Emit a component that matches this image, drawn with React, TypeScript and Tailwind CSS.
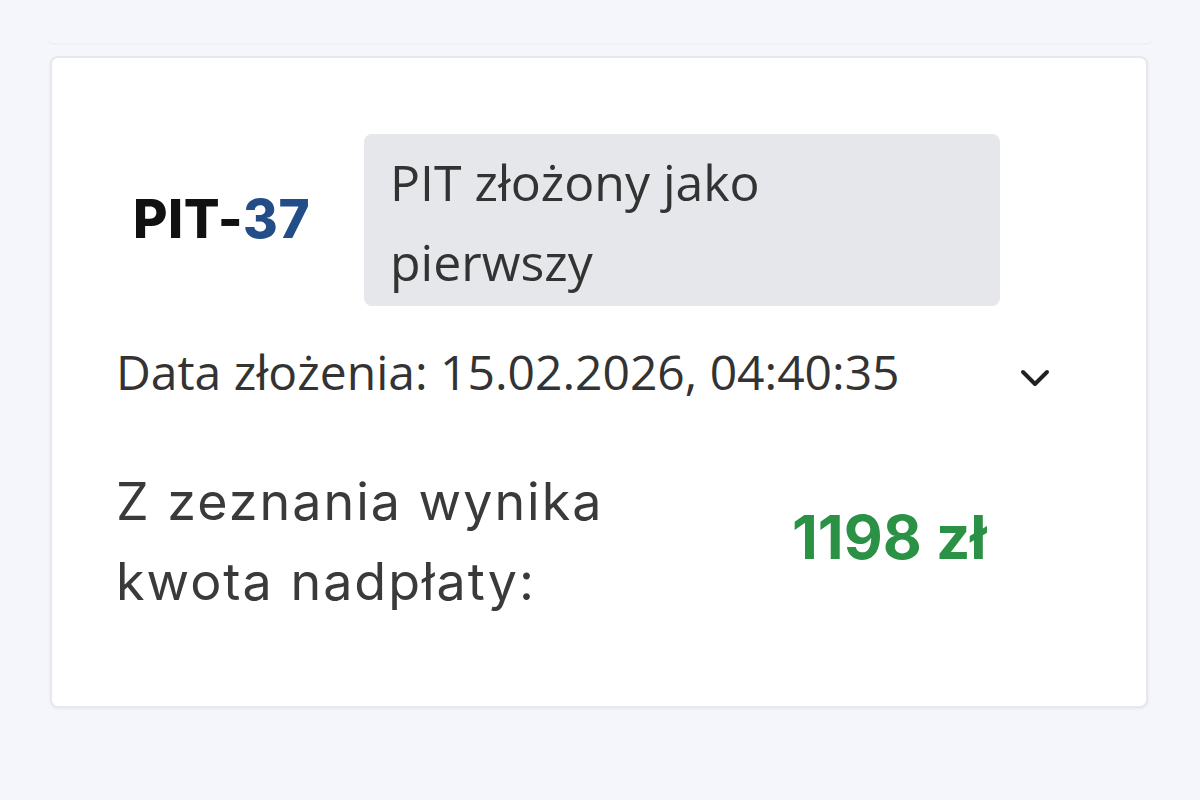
import React from "react";

export default function App() {
  return (
    <div className="w-[1200px] h-[800px] bg-[#f5f6fb] overflow-hidden flex flex-col" style={{ fontFamily: '"Open Sans", sans-serif' }}>
      <div className="mx-[46px] h-[45px] border-b-2 border-[#eef0f5] rounded-b-[8px]" />
      <div className="ml-[50px] mt-[11px] w-[1098px] h-[652px] bg-white border-2 border-[#e6e8ed] rounded-[8px] shadow-[0_1px_3px_rgba(0,0,0,0.06)] flex flex-col pl-[64px] pr-[94px] pt-[76px]">
        <div className="flex items-center">
          <div className="w-[248px] pl-[17px] text-[53px] font-extrabold text-[#111] tracking-[0.5px]" style={{ fontFamily: 'Inter, sans-serif' }}>
            PIT-<span className="text-[#224d87]">37</span>
          </div>
          <div className="w-[636px] h-[172px] bg-[#e6e7eb] rounded-[8px] pl-[26px] pt-[8px] text-[50px] leading-[80px] text-[#333]">
            PIT złożony jako<br />pierwszy
          </div>
        </div>
        <div className="flex items-center justify-between mt-[36px] h-[60px]">
          <div className="text-[48px] text-[#333]">Data złożenia: 15.02.2026, 04:40:35</div>
          <svg width="34" height="24" viewBox="0 0 34 24" className="mt-[12px]">
            <path d="M5 6 L17 18 L29 6" fill="none" stroke="#222" strokeWidth="4" strokeLinecap="round" strokeLinejoin="round" />
          </svg>
        </div>
        <div className="flex items-center mt-[60px]">
          <div className="w-[676px] text-[52px] leading-[80px] text-[#3a3a3a] tracking-[2px]" style={{ fontFamily: 'Inter, sans-serif', fontWeight: 400 }}>
            Z zeznania wynika<br />kwota nadpłaty:
          </div>
          <div className="mb-[10px] text-[60px] font-bold text-[#2b9145]" style={{ fontFamily: 'Inter, sans-serif' }}>1198 zł</div>
        </div>
      </div>
    </div>
  );
}
